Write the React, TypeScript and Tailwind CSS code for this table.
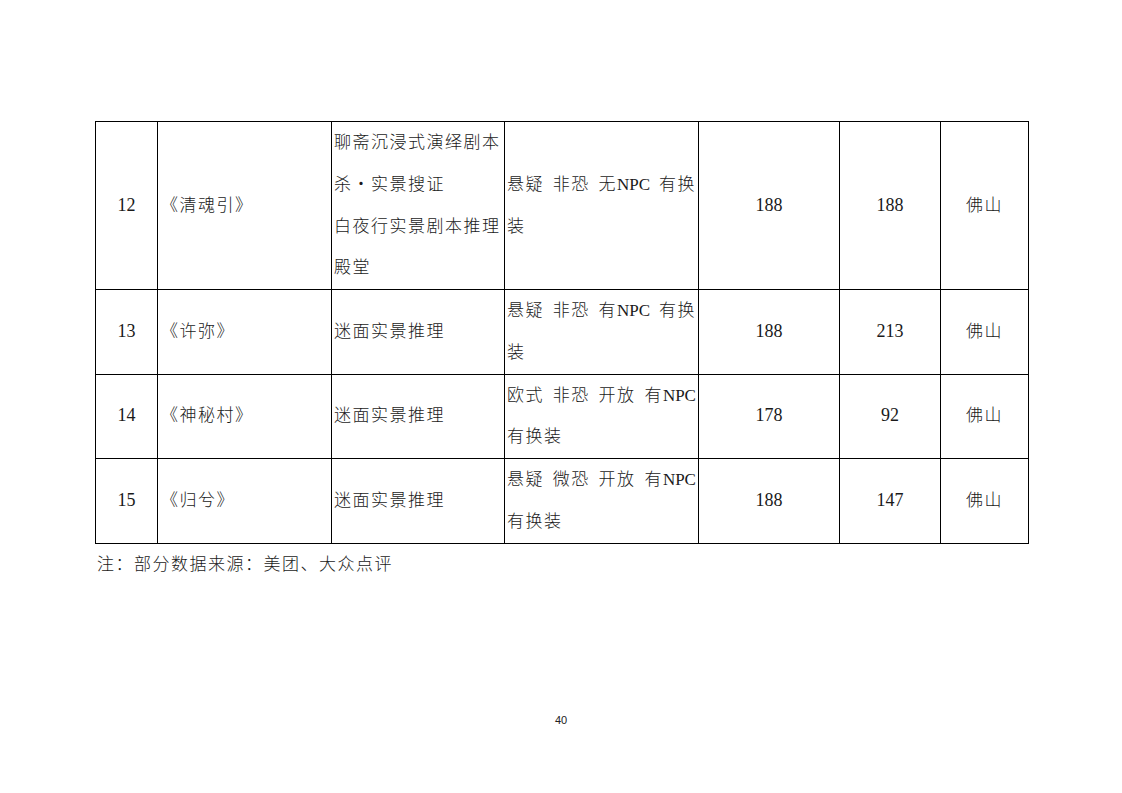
import React from 'react';

type Row = {
  no: string;
  name: string;
  venue: string[];
  tags: { first: string[]; rest: string };
  price: string;
  count: string;
  city: string;
};

const rows: Row[] = [
  {
    no: '12',
    name: '《清魂引》',
    venue: ['聊斋沉浸式演绎剧本', '杀・实景搜证', '白夜行实景剧本推理', '殿堂'],
    tags: { first: ['悬疑', '非恐', '无NPC', '有换'], rest: '装' },
    price: '188',
    count: '188',
    city: '佛山',
  },
  {
    no: '13',
    name: '《许弥》',
    venue: ['迷面实景推理'],
    tags: { first: ['悬疑', '非恐', '有NPC', '有换'], rest: '装' },
    price: '188',
    count: '213',
    city: '佛山',
  },
  {
    no: '14',
    name: '《神秘村》',
    venue: ['迷面实景推理'],
    tags: { first: ['欧式', '非恐', '开放', '有NPC'], rest: '有换装' },
    price: '178',
    count: '92',
    city: '佛山',
  },
  {
    no: '15',
    name: '《归兮》',
    venue: ['迷面实景推理'],
    tags: { first: ['悬疑', '微恐', '开放', '有NPC'], rest: '有换装' },
    price: '188',
    count: '147',
    city: '佛山',
  },
];

const font = "font-['Liberation_Serif','Noto_Sans_CJK_SC',serif]";

// latin runs inside a tag ("无NPC") keep normal spacing
const Tag = ({ text }: { text: string }) => {
  const m = text.match(/^(.*?)(NPC)$/);
  if (!m) return <span>{text}</span>;
  return (
    <span>
      {m[1]}
      <span className="tracking-normal">{m[2]}</span>
    </span>
  );
};

const App = () => {
  return (
    <div className={`w-[1122px] h-[793px] bg-white text-[#1a1a1a] ${font} flex flex-col`}>
      <div className="pl-[95px] pt-[121px]">
        <table className="border-collapse table-fixed w-[933px] text-[17px] leading-[41.75px] font-light">
          <colgroup>
            <col className="w-[62px]" />
            <col className="w-[174px]" />
            <col className="w-[173px]" />
            <col className="w-[194px]" />
            <col className="w-[141px]" />
            <col className="w-[101px]" />
            <col className="w-[88px]" />
          </colgroup>
          <tbody>
            {rows.map((r) => (
              <tr key={r.no}>
                <td className="border border-black text-center align-middle text-[18px] p-0">{r.no}</td>
                <td className="border border-black align-middle px-[3px] py-0 tracking-[1.5px]">{r.name}</td>
                <td className="border border-black align-middle px-[2px] py-0 tracking-[1.5px]">
                  {r.venue.map((v) => (
                    <div key={v} className="whitespace-nowrap">{v}</div>
                  ))}
                </td>
                <td className="border border-black align-middle px-[2px] py-0 tracking-[1.5px]">
                  <div className="flex justify-between">
                    {r.tags.first.map((t) => (
                      <Tag key={t} text={t} />
                    ))}
                  </div>
                  <div>{r.tags.rest}</div>
                </td>
                <td className="border border-black text-center align-middle text-[18px] p-0">{r.price}</td>
                <td className="border border-black text-center align-middle text-[18px] p-0">{r.count}</td>
                <td className="border border-black text-center align-middle p-0 tracking-[1.5px]">{r.city}</td>
              </tr>
            ))}
          </tbody>
        </table>
        <p className="pl-[2px] text-[17px] leading-[42px] tracking-[1.5px] font-light">注：部分数据来源：美团、大众点评</p>
      </div>
      <div className="mt-[126px] text-center text-[11px] font-['Liberation_Sans',sans-serif] text-[#222]">40</div>
    </div>
  );
};

export default App;
